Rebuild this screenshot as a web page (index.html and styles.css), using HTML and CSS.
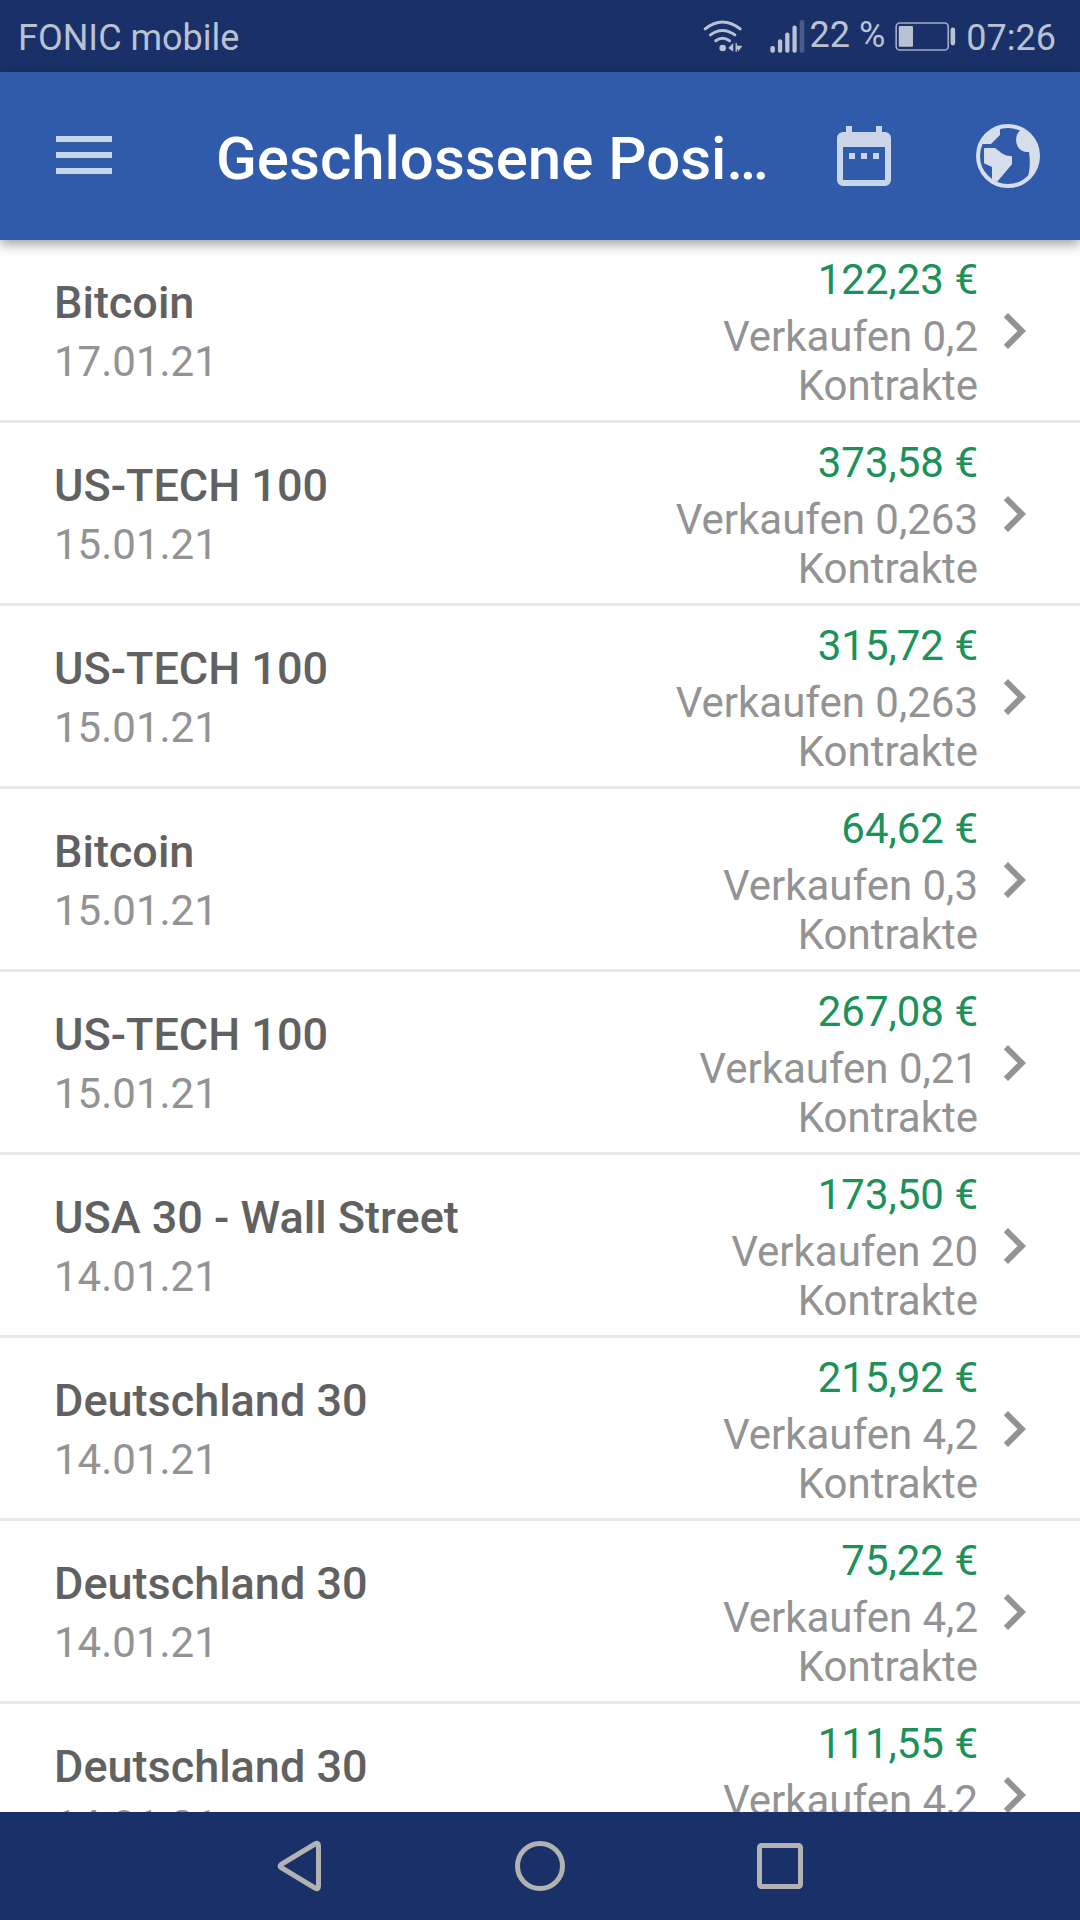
FILE: index.html
```html
<!DOCTYPE html>
<html lang="de">
<head>
<meta charset="utf-8">
<meta name="viewport" content="width=device-width, initial-scale=1">
<title>Geschlossene Positionen</title>
<link rel="stylesheet" href="styles.css">
</head>
<body>
<svg class="sprite" aria-hidden="true">
  <symbol id="chevron" viewBox="0 0 24 24"><path d="M10 6L8.59 7.41 13.17 12l-4.58 4.59L10 18l6-6z"/></symbol>
</svg>
<div class="status">
  <span class="carrier">FONIC mobile</span>
  <svg class="wifi" viewBox="0 0 120 100" aria-hidden="true">
    <g fill="none" stroke="currentColor" stroke-width="9" stroke-linecap="round">
      <path d="M6 27Q58-15 112 27"/><path d="M22 45Q58 18 96 45"/><path d="M38 63Q58 48 80 63"/>
    </g>
    <circle cx="59" cy="85" r="10"/>
    <path d="M91 70v26L76 85zM98 70h4v7l17 2-14 17v-7h-3v7h-4z"/>
  </svg>
  <svg class="signal" viewBox="0 0 104 100" aria-hidden="true">
    <rect x="0" y="79" width="14" height="20" rx="6"/><rect x="23" y="58" width="13" height="41" rx="6"/>
    <rect x="45" y="38" width="13" height="61" rx="6"/><rect x="67" y="17" width="13" height="82" rx="6"/>
    <rect x="89" y="0" width="14" height="99" rx="6" opacity=".3"/>
  </svg>
  <span class="percent">22 %</span>
  <svg class="battery" viewBox="0 0 184 88" aria-hidden="true">
    <rect x="3" y="3" width="158" height="82" rx="11" fill="none" stroke="currentColor" stroke-width="5" opacity=".85"/>
    <rect x="11" y="12" width="43" height="63" rx="3"/><rect x="168" y="17" width="14" height="54" rx="7"/>
  </svg>
  <span class="clock">07:26</span>
</div>

<header class="appbar">
  <button class="tool menu" aria-label="Menü">
    <svg viewBox="0 0 56 38"><path d="M0 0h56v6H0zM0 16h56v6H0zM0 32h56v6H0z"/></svg>
  </button>
  <h1>Geschlossene Positionen</h1>
  <button class="tool calendar" aria-label="Zeitraum">
    <svg viewBox="0 0 162 180"><path fill-rule="evenodd" d="M27 0h18v18h72V0h18v18h9a18 18 0 0 1 18 18v126a18 18 0 0 1-18 18H18a18 18 0 0 1-18-18V36a18 18 0 0 1 18-18h9zM18 63v99h126V63zM36 81h18v18H36zM72 81h18v18H72zM108 81h18v18h-18z"/></svg>
  </button>
  <button class="tool globe" aria-label="Welt">
    <svg viewBox="0 0 192 192">
      <circle cx="96" cy="96" r="90" fill="none" stroke="currentColor" stroke-width="12"/>
      <path d="M72 10V33L45 60H16A90 90 0 0 1 72 10z"/>
      <path d="M27 72H57C70 81 82 96 104 96Q108 96 108 100V121L63 174L48 168V129L24 118V76Q24 72 27 72z"/>
      <path d="M134 18C116 30 117 62 130 74C138 82 148 84 159 84C163 110 162 138 156 158L172 148A90 90 0 0 0 134 14z"/>
    </svg>
  </button>
</header>

<main class="content">
  <ul class="list">
    <li><a class="row" href="#"><span class="info"><span class="name">Bitcoin</span><span class="date">17.01.21</span></span><span class="deal"><span class="amount">122,23 €</span><span class="size">Verkaufen 0,2 Kontrakte</span></span><svg class="chevron"><use href="#chevron"/></svg></a></li>
    <li><a class="row" href="#"><span class="info"><span class="name">US-TECH 100</span><span class="date">15.01.21</span></span><span class="deal"><span class="amount">373,58 €</span><span class="size">Verkaufen 0,263 Kontrakte</span></span><svg class="chevron"><use href="#chevron"/></svg></a></li>
    <li><a class="row" href="#"><span class="info"><span class="name">US-TECH 100</span><span class="date">15.01.21</span></span><span class="deal"><span class="amount">315,72 €</span><span class="size">Verkaufen 0,263 Kontrakte</span></span><svg class="chevron"><use href="#chevron"/></svg></a></li>
    <li><a class="row" href="#"><span class="info"><span class="name">Bitcoin</span><span class="date">15.01.21</span></span><span class="deal"><span class="amount">64,62 €</span><span class="size">Verkaufen 0,3 Kontrakte</span></span><svg class="chevron"><use href="#chevron"/></svg></a></li>
    <li><a class="row" href="#"><span class="info"><span class="name">US-TECH 100</span><span class="date">15.01.21</span></span><span class="deal"><span class="amount">267,08 €</span><span class="size">Verkaufen 0,21 Kontrakte</span></span><svg class="chevron"><use href="#chevron"/></svg></a></li>
    <li><a class="row" href="#"><span class="info"><span class="name">USA 30 - Wall Street</span><span class="date">14.01.21</span></span><span class="deal"><span class="amount">173,50 €</span><span class="size">Verkaufen 20 Kontrakte</span></span><svg class="chevron"><use href="#chevron"/></svg></a></li>
    <li><a class="row" href="#"><span class="info"><span class="name">Deutschland 30</span><span class="date">14.01.21</span></span><span class="deal"><span class="amount">215,92 €</span><span class="size">Verkaufen 4,2 Kontrakte</span></span><svg class="chevron"><use href="#chevron"/></svg></a></li>
    <li><a class="row" href="#"><span class="info"><span class="name">Deutschland 30</span><span class="date">14.01.21</span></span><span class="deal"><span class="amount">75,22 €</span><span class="size">Verkaufen 4,2 Kontrakte</span></span><svg class="chevron"><use href="#chevron"/></svg></a></li>
    <li><a class="row" href="#"><span class="info"><span class="name">Deutschland 30</span><span class="date">14.01.21</span></span><span class="deal"><span class="amount">111,55 €</span><span class="size">Verkaufen 4,2 Kontrakte</span></span><svg class="chevron"><use href="#chevron"/></svg></a></li>
  </ul>
</main>

<nav class="navbar">
  <button aria-label="Zurück"><svg viewBox="0 0 52 52"><path d="M7 27.500Q5.500 26 7 24.500L41 4Q44.500 2 44.500 6V46Q44.500 50 41 48z"/></svg></button>
  <button aria-label="Startseite"><svg viewBox="0 0 52 52"><circle cx="26" cy="26" r="22.500"/></svg></button>
  <button aria-label="Übersicht"><svg viewBox="0 0 52 52"><rect x="5.500" y="5.500" width="41" height="41" rx="2"/></svg></button>
</nav>
</body>
</html>
```
FILE: styles.css
```css
* { box-sizing: border-box; }

body {
  margin: 0;
  height: 100vh;
  display: flex;
  flex-direction: column;
  background: #fff;
  font-family: Roboto, "Liberation Sans", sans-serif;
  font-size: 42px;
  line-height: 49px;
}

button {
  display: flex;
  align-items: center;
  justify-content: center;
  padding: 0;
  border: 0;
  background: none;
  color: inherit;
}

svg { display: block; fill: currentColor; }

.sprite { display: none; }

/* System status bar */
.status {
  flex: none;
  display: flex;
  align-items: center;
  height: 72px;
  padding: 0 24px 0 18px;
  background: #193168;
  color: #bac1d2;
  font-size: 36px;
  line-height: 42px;
  white-space: nowrap;
}

.carrier { flex: 1; padding-top: 4px; }
.wifi { width: 40px; height: 33px; margin-right: 27px; }
.signal { width: 35px; height: 33px; margin-right: 5px; }
.percent { padding-bottom: 2px; }
.battery { width: 61px; height: 29px; margin: 0 10px; }
.clock { padding-top: 4px; }

/* App bar */
.appbar {
  flex: none;
  display: flex;
  align-items: center;
  height: 168px;
  padding: 0 28px 0 32px;
  background: #305aaa;
  color: #cad5e8;
  box-shadow: 0 4px 12px rgba(0, 0, 0, 0.4);
  z-index: 1;
}

.tool { flex: none; height: 104px; }
.menu { width: 104px; padding-bottom: 2px; }
.menu svg { width: 56px; height: 38px; }
.calendar { width: 80px; margin-left: 48px; }
.calendar svg { width: 54px; height: 60px; }
.globe { width: 88px; margin-left: 60px; color: #d6deec; }
.globe svg { width: 64px; height: 64px; }

.appbar h1 {
  flex: 1;
  min-width: 0;
  margin: 0 0 0 80px;
  padding-top: 6px;
  overflow: hidden;
  color: #fff;
  font-size: 60px;
  font-weight: 500;
  line-height: 70px;
  text-overflow: ellipsis;
  white-space: nowrap;
}

/* Closed positions */
.content {
  flex: 1;
  min-height: 0;
  overflow-y: auto;
  scrollbar-width: none;
}

.list { margin: 0; padding: 0; list-style: none; }

.row {
  display: flex;
  align-items: center;
  padding: 15px 30px 10px 54px;
  border-bottom: 3px solid #e8e9e9;
  color: #939393;
  text-decoration: none;
}

.info { flex: 1; display: grid; gap: 8px; padding-bottom: 3px; }
.name { color: #616161; font-size: 45px; font-weight: 500; line-height: 53px; }
.deal { display: grid; gap: 8px; max-width: 320px; text-align: right; }
.amount { color: #1c9159; }
.chevron { flex: none; width: 72px; height: 72px; margin-bottom: 4px; }

/* System navigation */
.navbar {
  flex: none;
  display: flex;
  align-items: center;
  justify-content: center;
  gap: 160px;
  height: 108px;
  background: #193168;
  color: #b2b2b2;
}

.navbar button { width: 80px; height: 80px; }
.navbar svg { width: 52px; height: 52px; fill: none; stroke: currentColor; stroke-width: 5px; }
```
